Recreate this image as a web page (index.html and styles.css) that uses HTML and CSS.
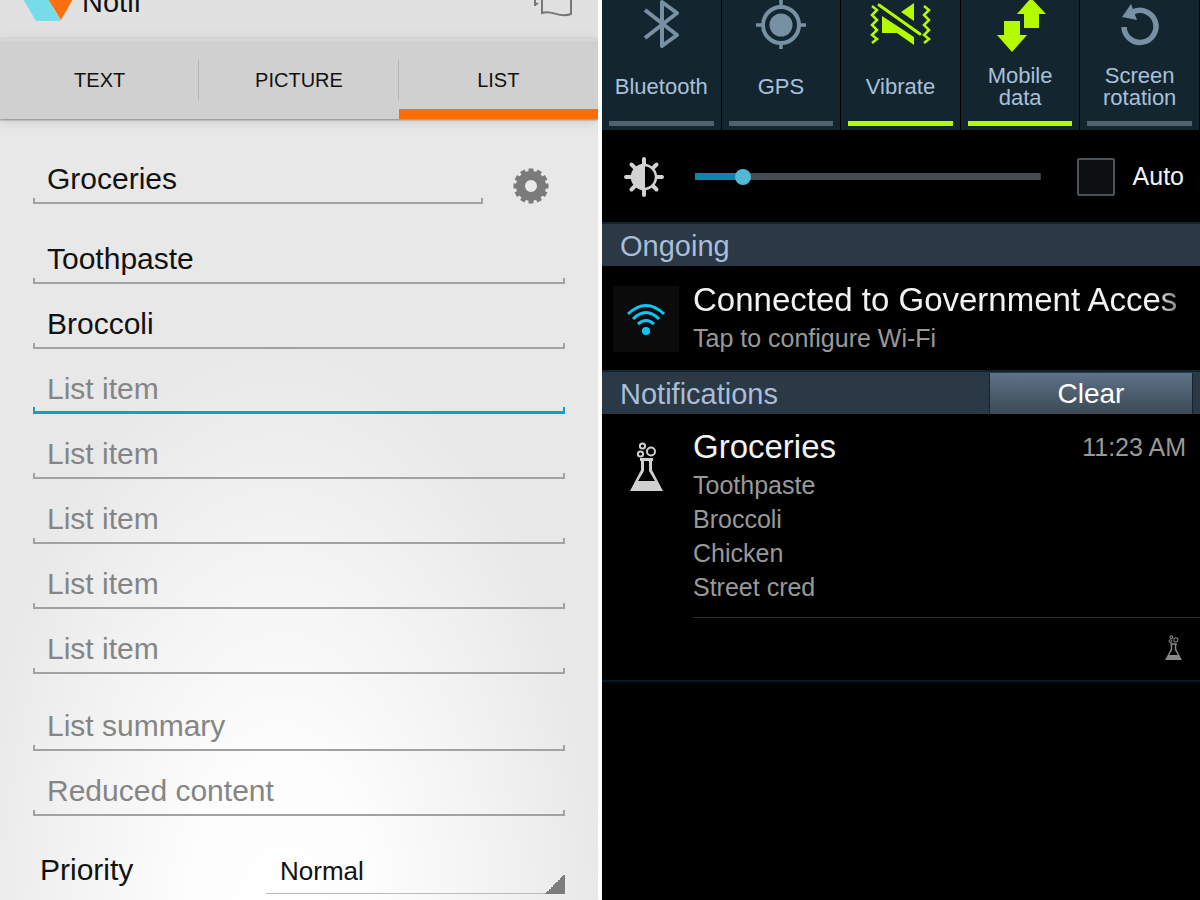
FILE: index.html
```html
<!DOCTYPE html>
<html lang="en">
<head>
<meta charset="utf-8">
<title>Notif</title>
<link rel="stylesheet" href="styles.css">
</head>
<body>
<svg class="defs" aria-hidden="true">
  <symbol id="flask" viewBox="0 0 33 49">
    <path fill="currentColor" fill-rule="evenodd" d="M10 16h13v3h-1v9l11 21H0l11-21v-9h-1zm4 3v10L8 39h17l-6-10V19z"/>
    <g fill="none" stroke="currentColor" stroke-width="2"><circle cx="12.500" cy="4" r="2.600"/><circle cx="10.500" cy="12" r="2.600"/><circle cx="21" cy="9.500" r="4"/></g>
  </symbol>
</svg>
<div class="screens">
  <main class="editor">
    <header class="appbar">
      <svg class="logo" width="50" height="42" viewBox="0 0 50 42"><path fill="#76dce9" d="M12 0L0 20l13 22h25L25 20z"/><path fill="#fa7010" d="M25 20h25L38 41z"/></svg>
      <h1 class="app-name">Notif</h1>
      <button class="flag" aria-label="Templates"><svg width="38" height="36" viewBox="0 0 38 36" fill="none" stroke="#777" stroke-width="2"><path d="M8 4v27c10-4 17 6 29 1V4M1 8v16M1 23l3-2"/></svg></button>
    </header>
    <nav class="tabs">
      <a href="#text">TEXT</a>
      <a href="#picture">PICTURE</a>
      <a href="#list" class="current">LIST</a>
    </nav>
    <form class="form">
      <div class="title-row">
        <input class="field" aria-label="Title" value="Groceries">
        <button type="button" class="gear" aria-label="Settings"><svg width="36" height="36" viewBox="-18 -18 36 36"><g stroke="#7b7b7b" stroke-width="5"><path d="M0-17.500V17.500M-17.500 0h35"/><path transform="rotate(30)" d="M0-17.500V17.500M-17.500 0h35"/><path transform="rotate(60)" d="M0-17.500V17.500M-17.500 0h35"/></g><circle r="10.500" fill="#e9e9e9" stroke="#7b7b7b" stroke-width="9"/></svg></button>
      </div>
      <div class="items">
        <input class="field" aria-label="Item 1" value="Toothpaste">
        <input class="field" aria-label="Item 2" value="Broccoli">
        <input class="field active" aria-label="Item 3" placeholder="List item">
        <input class="field" aria-label="Item 4" placeholder="List item">
        <input class="field" aria-label="Item 5" placeholder="List item">
        <input class="field" aria-label="Item 6" placeholder="List item">
        <input class="field" aria-label="Item 7" placeholder="List item">
      </div>
      <div class="items extras">
        <input class="field" aria-label="Summary" placeholder="List summary">
        <input class="field" aria-label="Reduced" placeholder="Reduced content">
      </div>
      <div class="priority">
        <label for="priority">Priority</label>
        <select id="priority"><option>Normal</option></select>
      </div>
    </form>
  </main>

  <section class="shade">
    <div class="toggles">
      <button class="toggle"><svg viewBox="0 0 80 52"><path fill="none" stroke="#7890a3" stroke-width="4" stroke-linejoin="round" d="M24 10l32 25-15 11V2l15 11-32 25"/></svg><span>Bluetooth</span></button>
      <button class="toggle"><svg viewBox="0 0 80 52" fill="none" stroke="#7890a3"><circle cx="40" cy="25" r="18" stroke-width="4"/><circle cx="40" cy="25" r="11.500" fill="#7890a3" stroke="none"/><path stroke-width="3.500" d="M40 0v6M40 44v5M15 25h6M59 25h6"/></svg><span>GPS</span></button>
      <button class="toggle on"><svg viewBox="0 0 80 52"><g fill="none" stroke="#b4fb00" stroke-width="2.500"><path d="M12 6l5 4-5 5 5 5-5 5 5 5-5 5 5 4-5 4M64 6l5 4-5 5 5 5-5 5 5 5-5 5 5 4-5 4"/><path stroke-width="3" stroke-linecap="round" d="M19 5l41 29"/></g><path fill="#b4fb00" d="M22 16l32 21v8L37 33H22zM41 12l13-9v18z"/></svg><span>Vibrate</span></button>
      <button class="toggle on"><svg viewBox="0 0 80 52"><path fill="#b4fb00" d="M51-2l15 16h-7v14H44V14h-7zM24 21h16v14h7L32 52 17 35h7z"/></svg><span>Mobile<br>data</span></button>
      <button class="toggle"><svg viewBox="0 0 80 52"><path fill="none" stroke="#7890a3" stroke-width="5.500" d="M24 27a16 16 0 1 0 9-15"/><path fill="#7890a3" d="M31 4l6 16-15-3z"/></svg><span>Screen<br>rotation</span></button>
    </div>
    <div class="brightness">
      <svg width="40" height="40" viewBox="-20 -20 40 40"><g stroke="#d2d2d2" stroke-width="4" stroke-linecap="round"><path d="M0-18v5M0 13v5M-18 0h5M13 0h5M-12.500-12.500l3 3M9.500 9.500l3 3M-12.500 12.500l3-3M9.500-9.500l3-3"/></g><circle r="12" fill="#000" stroke="#d2d2d2" stroke-width="2.500"/><path fill="#d2d2d2" d="M1-12v24a12 12 0 0 1-1-24z"/></svg>
      <input class="slider" type="range" min="0" max="100" value="12" aria-label="Brightness">
      <label class="auto"><input type="checkbox"><span>Auto</span></label>
    </div>
    <h2 class="section">Ongoing</h2>
    <article class="notice wifi">
      <div class="wifi-icon"><svg width="40" height="34" viewBox="0 0 40 34" fill="none" stroke="#08c8f8" stroke-width="3"><path d="M2 12Q20-5 38 12M7 17Q20 4 33 17M12 22Q20 15 28 22"/><circle cx="20" cy="29" r="4" fill="#08c8f8" stroke="none"/></svg></div>
      <div class="body"><h3 class="fade">Connected to Government Acces</h3><p>Tap to configure Wi-Fi</p></div>
    </article>
    <div class="section"><h2>Notifications</h2><button class="clear">Clear</button></div>
    <article class="notice groceries">
      <svg class="flask"><use href="#flask"/></svg>
      <div class="body">
        <div class="heading"><h3>Groceries</h3><time>11:23 AM</time></div>
        <ul><li>Toothpaste</li><li>Broccoli</li><li>Chicken</li><li>Street cred</li></ul>
        <footer><svg class="flask-small"><use href="#flask"/></svg></footer>
      </div>
    </article>
  </section>
</div>
</body>
</html>
```
FILE: styles.css
```css
* { box-sizing: border-box; }
body { margin: 0; background: #fff; font-family: "Liberation Sans", Arial, sans-serif; }
h1, h2, h3, p, ul { margin: 0; padding: 0; font-weight: 400; list-style: none; }
button { font: inherit; color: inherit; border: 0; padding: 0; background: none; }
svg { display: block; flex: none; }
.defs { position: absolute; width: 0; height: 0; }
.screens { display: grid; grid-template-columns: minmax(0, 1fr) minmax(0, 1fr); gap: 4px; height: 100vh; overflow: hidden; }

.editor { background: radial-gradient(ellipse 54% 68% at 47% 105%, #fff 0%, #fdfdfd 30%, #f1f1f1 72%, #e8e8e8 100%); overflow: hidden; }
.appbar { display: flex; align-items: flex-end; height: 38px; padding: 0 26px 17px 23px; background: #e1e1e1; overflow: hidden; }
.app-name { flex: 1; margin-left: 9px; font-size: 29px; line-height: 38px; color: #111; }
.flag { margin-bottom: 3px; }
.tabs { display: flex; height: 81px; background: #d0d0d0; border-top: 3px solid #d6d6d6; box-shadow: 0 1px 2px #888, 0 3px 12px #ccc; }
.tabs a { flex: 1; display: flex; align-items: center; justify-content: center; font-size: 20px; color: #111; text-decoration: none; background: linear-gradient(#b4b4b4, #b4b4b4) right 19px / 1px 40px no-repeat; }
.tabs .current { background: linear-gradient(#ff6c00, #ff6c00) bottom / 100% 10px no-repeat; }

.form { padding: 41px 33px 0; }
.title-row { display: flex; justify-content: space-between; padding-right: 16px; }
.title-row .field { flex: none; width: 450px; max-width: 88%; }
.gear { padding: 8px 0 0; }
.field {
  --line: #a2a2a2; --thick: 2px; --tick: 6px;
  width: 100%; height: 44px; padding: 2px 14px 8px; border: 0; outline: 0;
  font: 30px/34px "Liberation Sans", Arial, sans-serif; color: #111;
  background:
    linear-gradient(var(--line), var(--line)) left bottom / 2px var(--tick) no-repeat,
    linear-gradient(var(--line), var(--line)) right bottom / 2px var(--tick) no-repeat,
    linear-gradient(var(--line), var(--line)) bottom / 100% var(--thick) no-repeat;
}
.field.active { --line: #1a9ac8; --thick: 3px; --tick: 7px; }
.field::placeholder { color: #858585; opacity: 1; }
.items { display: grid; gap: 21px; padding-top: 36px; }
.extras { padding-top: 33px; }
.priority { display: flex; padding: 34px 0 0 7px; font-size: 30px; line-height: 40px; color: #111; }
.priority label { flex: 1; }
.priority select {
  appearance: none; width: 299px; height: 44px; border: 0; border-radius: 0; padding: 0 14px 2px; outline: 0;
  font: 26px "Liberation Sans", Arial, sans-serif; color: #111;
  background:
    linear-gradient(135deg, transparent 50%, #7d7d7d 50%) right bottom / 20px 20px no-repeat,
    linear-gradient(#bbb, #bbb) bottom / 100% 1px no-repeat;
}

.shade { background: #000; color: #f2f2f2; overflow: hidden; }
.toggles { display: flex; height: 130px; background: #132630; }
.toggle { flex: 1; display: flex; flex-direction: column; align-items: center; padding: 0 7px 4px; border-right: 1px solid #000; font-size: 22px; line-height: 22px; color: #a9c0da; }
.toggle svg { width: 80px; height: 52px; overflow: visible; }
.toggle span { flex: 1; display: flex; align-items: center; text-align: center; padding-top: 1px; }
.toggle::after { content: ""; align-self: stretch; height: 5px; background: #50616f; }
.toggle.on::after { background: #b4fb00; }
.brightness { display: flex; align-items: center; height: 92px; padding: 1px 16px 0 22px; font-size: 25px; }
.slider { appearance: none; flex: 1; min-width: 0; margin: 0 36px 0 31px; height: 16px; background: linear-gradient(90deg, #0a86a8 14%, #454c52 14%) center / 100% 7px no-repeat; }
.slider::-webkit-slider-thumb { appearance: none; width: 16px; height: 16px; border-radius: 50%; background: #52b9d4; }
.auto { display: flex; align-items: center; gap: 18px; }
.auto input { appearance: none; width: 38px; height: 38px; margin: 0; border: 2px solid #4b5258; border-radius: 2px; background: #0d0f11; }
.section { display: flex; align-items: center; justify-content: space-between; height: 44px; padding: 1px 7px 0 18px; border-top: 2px solid #11242d; background: #2a3945; color: #a9bdd8; font-size: 29px; line-height: 40px; }
.section h2 { font-size: 29px; }
.clear { width: 204px; height: 41px; font-size: 28px; color: #fff; background: linear-gradient(#5e7389, #3a4954); border: solid #14252f; border-width: 0 1px; }
.notice { display: flex; }
.body { flex: 1; min-width: 0; }
.notice h3 { font-size: 33px; line-height: 38px; white-space: nowrap; }
.notice p, .notice li, .notice time { font-size: 25px; line-height: 34px; color: #999; }
.wifi { height: 104px; padding: 15px 14px 0 11px; gap: 14px; }
.wifi-icon { display: flex; align-items: center; justify-content: center; width: 66px; height: 66px; margin-top: 5px; background: #0b0b0b; }
.wifi p { margin-top: 2px; }
.fade { mask-image: linear-gradient(90deg, #000 94%, rgba(0, 0, 0, 0.3)); }
.groceries { padding: 14px 0 0 28px; gap: 30px; border-bottom: 2px solid #071822; }
.flask { width: 33px; height: 49px; margin-top: 14px; color: #d0d0d0; }
.heading { display: flex; justify-content: space-between; align-items: flex-end; padding-right: 14px; margin-bottom: 2px; }
.heading time { padding-bottom: 2px; }
.groceries footer { display: flex; justify-content: flex-end; margin-top: 13px; padding: 17px 18px 20px; border-top: 1px solid #2c2c2c; }
.flask-small { width: 17px; height: 25px; color: #888; }
```
